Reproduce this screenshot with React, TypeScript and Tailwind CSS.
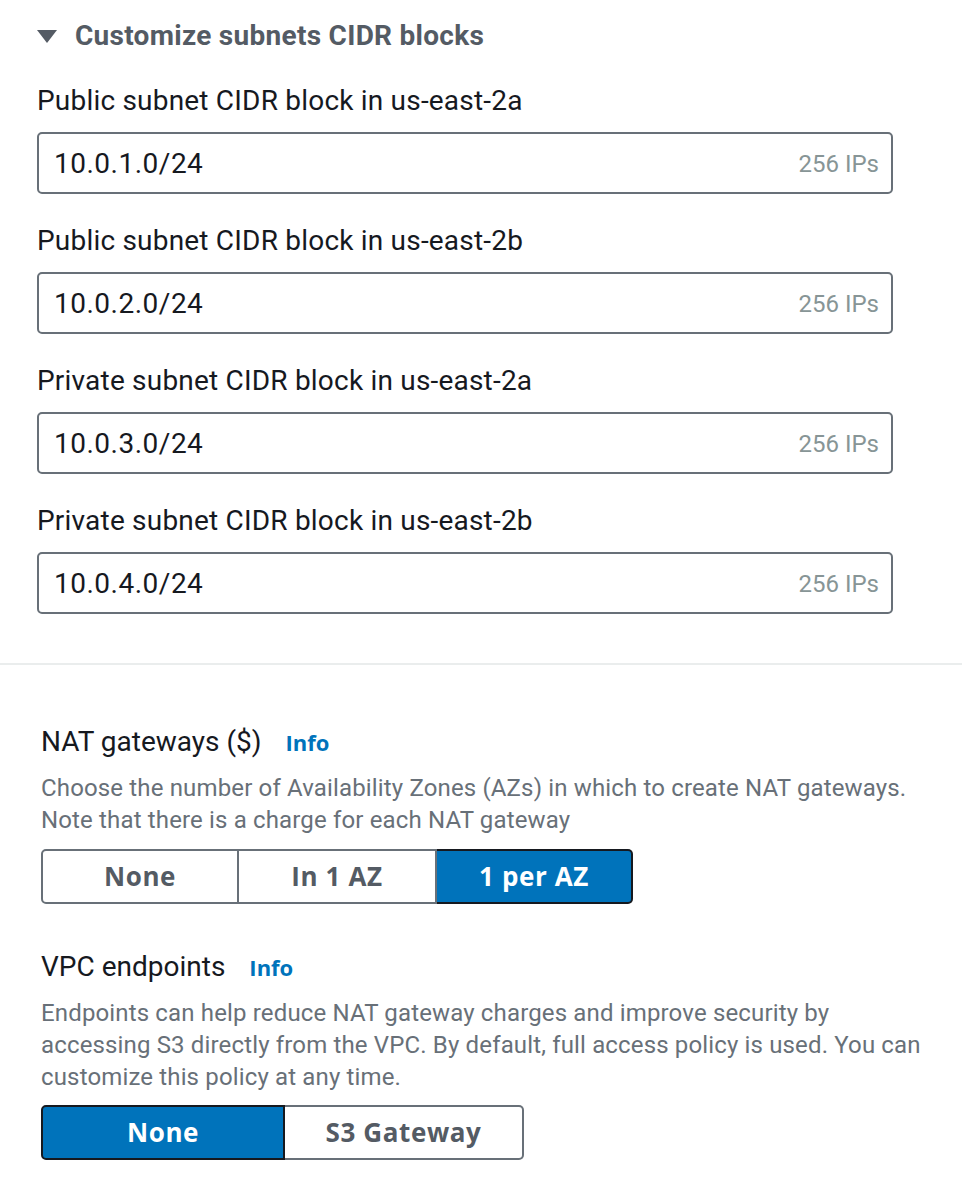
import React from "react";

const font = { fontFamily: "Roboto, 'Noto Sans', Arial, sans-serif" };
const wideBold = { fontFamily: "'Open Sans', 'Noto Sans', Arial, sans-serif" };

function Field({ label, value }: { label: string; value: string }) {
  return (
    <div className="flex flex-col">
      <div className="h-8 leading-8 text-[28px] tracking-[0.2px] text-[#16191f]">{label}</div>
      <div className="mt-[15px] h-[62px] w-[856px] rounded-[5px] border-2 border-[#687078] bg-white flex items-center justify-between pl-[15px] pr-[12px]">
        <span className="text-[28px] tracking-[0.5px] text-[#16191f] pt-[2px]">{value}</span>
        <span className="text-[24px] text-[#879596] pt-[2px]">256 IPs</span>
      </div>
    </div>
  );
}

function Segmented({
  options,
  selected,
  widths,
}: {
  options: string[];
  selected: number;
  widths: string[];
}) {
  return (
    <div className="flex h-[55px]" style={wideBold}>
      {options.map((o, i) => {
        const sel = i === selected;
        const first = i === 0;
        const last = i === options.length - 1;
        return (
          <div
            key={o}
            className={[
              "flex items-center justify-center text-[26px] tracking-[0.6px] font-bold border-y-2",
              widths[i],
              first ? "border-l-2 rounded-l-[5px]" : "",
              last ? "border-r-2 rounded-r-[5px]" : "border-r-2",
              sel
                ? "bg-[#0073bb] text-white border-[#16191f]"
                : "bg-white text-[#545b64] border-[#687078]",
            ].join(" ")}
          >
            {o}
          </div>
        );
      })}
    </div>
  );
}

function Info({ ml }: { ml: string }) {
  return (
    <span className={`${ml} text-[22px] font-bold text-[#0073bb]`} style={wideBold}>
      Info
    </span>
  );
}

export default function App() {
  return (
    <div className="w-[962px] h-[1200px] bg-white" style={font}>
      <div className="pl-[37px] pt-[20px]">
        <div className="flex items-center h-8">
          <svg width="20" height="13" viewBox="0 0 20 13" className="mr-[18px]">
            <polygon points="0,0 20,0 10,13" fill="#545b64" />
          </svg>
          <span className="text-[28px] tracking-[0.28px] font-bold text-[#545b64] leading-8">
            Customize subnets CIDR blocks
          </span>
        </div>
        <div className="mt-[33px] flex flex-col gap-[31px]">
          <Field label="Public subnet CIDR block in us-east-2a" value="10.0.1.0/24" />
          <Field label="Public subnet CIDR block in us-east-2b" value="10.0.2.0/24" />
          <Field label="Private subnet CIDR block in us-east-2a" value="10.0.3.0/24" />
          <Field label="Private subnet CIDR block in us-east-2b" value="10.0.4.0/24" />
        </div>
      </div>
      <div className="mt-[49px] h-[2px] bg-[#eaeded]" />
      <div className="pl-[41px] pt-[61px]">
        <div className="flex items-baseline h-8 leading-8">
          <span className="text-[28px] text-[#16191f]">NAT gateways ($)</span>
          <Info ml="ml-[24px]" />
        </div>
        <div className="mt-[14px] text-[24px] tracking-[0.15px] leading-8 text-[#687078] w-[921px]">
          Choose the number of Availability Zones (AZs) in which to create NAT gateways.
          <br />
          Note that there is a charge for each NAT gateway
        </div>
        <div className="mt-[13px]">
          <Segmented
            options={["None", "In 1 AZ", "1 per AZ"]}
            selected={2}
            widths={["w-[198px]", "w-[198px]", "w-[196px]"]}
          />
        </div>
        <div className="mt-[47px] flex items-baseline h-8 leading-8">
          <span className="text-[28px] text-[#16191f]">VPC endpoints</span>
          <Info ml="ml-[24px]" />
        </div>
        <div className="mt-[14px] text-[24px] tracking-[0.15px] leading-8 text-[#687078] w-[921px]">
          Endpoints can help reduce NAT gateway charges and improve security by
          <br />
          accessing S3 directly from the VPC. By default, full access policy is used. You can
          <br />
          customize this policy at any time.
        </div>
        <div className="mt-[12px]">
          <Segmented
            options={["None", "S3 Gateway"]}
            selected={0}
            widths={["w-[244px]", "w-[239px]"]}
          />
        </div>
      </div>
    </div>
  );
}
